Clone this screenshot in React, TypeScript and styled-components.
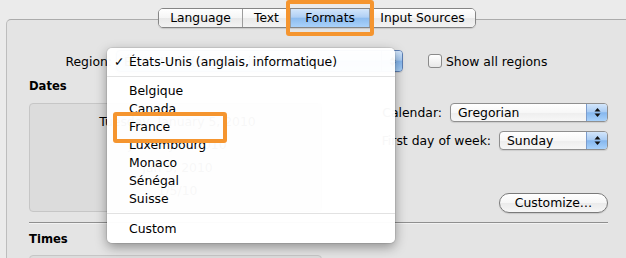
import React, { FC } from 'react'
import styled, { createGlobalStyle } from 'styled-components'

const tabs = [
  { label: 'Language', w: 83 },
  { label: 'Text', w: 47 },
  { label: 'Formats', w: 78, active: true },
  { label: 'Input Sources', w: 105 },
]

const regions = ['Belgique', 'Canada', 'France', 'Luxembourg', 'Monaco', 'Sénégal', 'Suisse']

const dates = ['Tuesday, January 5, 2010', 'January 5, 2010', 'Jan 5, 2010', '1/5/10']

const Arrows: FC = () => (
  <svg width="7" height="11" viewBox="0 0 7 11">
    <path d="M3.5 1 L6.5 4.5 L0.5 4.5 Z" fill="#111" />
    <path d="M3.5 10 L6.5 6.5 L0.5 6.5 Z" fill="#111" />
  </svg>
)

const App: FC = () => {
  return (
    <Page>
      <GlobalStyle />
      <TabBar>
        {tabs.map((t) => (
          <Tab key={t.label} $w={t.w} $active={!!t.active}>
            {t.label}
          </Tab>
        ))}
      </TabBar>
      <Panel>
        <RegionRow>
          <RegionLabel>Region:</RegionLabel>
          <Popup $w={287} $h={22} $open>
            <PopupText>États-Unis (anglais, informatique)</PopupText>
            <PopupArrow>
              <Arrows />
            </PopupArrow>
          </Popup>
          <CheckRow>
            <CheckBox />
            <span>Show all regions</span>
          </CheckRow>
        </RegionRow>

        <Heading>Dates</Heading>
        <SectionBody>
          <SampleBox>
            {dates.map((d) => (
              <SampleLine key={d}>{d}</SampleLine>
            ))}
          </SampleBox>
          <RightCol>
            <FieldRow>
              <span>Calendar:</span>
              <Popup $w={158} $h={19}>
                <PopupText>Gregorian</PopupText>
                <PopupArrow>
                  <Arrows />
                </PopupArrow>
              </Popup>
            </FieldRow>
            <FieldRow $mt={9}>
              <span>First day of week:</span>
              <Popup $w={109} $h={19}>
                <PopupText>Sunday</PopupText>
                <PopupArrow>
                  <Arrows />
                </PopupArrow>
              </Popup>
            </FieldRow>
            <PillButton>Customize…</PillButton>
          </RightCol>
        </SectionBody>
        <Rule />
        <Heading $mt={10}>Times</Heading>
        <SectionBody $mt={9}>
          <SampleBox />
        </SectionBody>
      </Panel>

      <Menu>
        <MenuItem>
          <Mark>✓</Mark>
          États-Unis (anglais, informatique)
        </MenuItem>
        <MenuSep />
        {regions.map((r) => (
          <MenuItem key={r}>
            <Mark />
            {r}
          </MenuItem>
        ))}
        <MenuSep $mb={6} />
        <MenuItem>
          <Mark />
          Custom
        </MenuItem>
      </Menu>

      <FormatsMark />
      <FranceMark />
    </Page>
  )
}

export default App

const GlobalStyle = createGlobalStyle`
  html, body {
    margin: 0;
    padding: 0;
    background: #ebebeb;
  }
  body {
    font-family: 'DejaVu Sans', 'Liberation Sans', sans-serif;
    font-size: 12.4px;
    color: #000;
  }
`

const Page = styled.div`
  position: relative;
  width: 626px;
  height: 258px;
  overflow: hidden;
  box-sizing: border-box;
  padding: 8px 0 0 6px;
  background: #ebebeb;
`

const TabBar = styled.div`
  position: relative;
  z-index: 1;
  display: flex;
  width: fit-content;
  height: 18px;
  margin-left: 152px;
  border: 1px solid #858585;
  border-radius: 5px;
  overflow: hidden;
  box-shadow: 0 1px 1px rgba(0, 0, 0, 0.12);
`

const Tab = styled.div<{ $w: number; $active: boolean }>`
  width: ${(p) => p.$w}px;
  line-height: 18px;
  text-align: center;
  font-size: 12.3px;
  background: ${(p) =>
    p.$active
      ? 'linear-gradient(#d3e6fb 0%, #b0d0f5 45%, #8dbcef 52%, #a9d2fb 100%)'
      : 'linear-gradient(#ffffff 0%, #f5f5f5 50%, #e9e9e9 52%, #f3f3f3 100%)'};
  & + & {
    border-left: 1px solid #9c9c9c;
  }
`

const Panel = styled.div`
  width: 640px;
  height: 260px;
  margin-top: -9px;
  box-sizing: border-box;
  border-top: 1px solid #ababab;
  border-left: 1px solid #bdbdbd;
  border-top-left-radius: 5px;
  background: #e4e4e4;
`

const RegionRow = styled.div`
  display: flex;
  align-items: center;
  height: 22px;
  margin-top: 30px;
`

const RegionLabel = styled.div`
  width: 105px;
  margin-right: 4px;
  text-align: right;
`

const Popup = styled.div<{ $w: number; $h: number; $open?: boolean }>`
  display: flex;
  align-items: center;
  width: ${(p) => p.$w}px;
  height: ${(p) => p.$h}px;
  box-sizing: border-box;
  border: 1px solid ${(p) => (p.$open ? '#5d7fb4' : '#8f8f8f')};
  border-radius: 4px;
  overflow: hidden;
  background: ${(p) =>
    p.$open
      ? 'linear-gradient(#d3e6fb 0%, #b0d0f5 45%, #8dbcef 52%, #a9d2fb 100%)'
      : 'linear-gradient(#ffffff 0%, #f7f7f7 50%, #eeeeee 52%, #f7f7f7 100%)'};
  box-shadow: 0 1px 1px rgba(0, 0, 0, 0.1);
`

const PopupText = styled.span`
  flex: 1;
  padding-left: 7px;
  white-space: nowrap;
`

const PopupArrow = styled.div`
  display: flex;
  align-items: center;
  justify-content: center;
  width: 20px;
  height: 100%;
  border-left: 1px solid #7c9ccc;
  background: linear-gradient(#d3e6fb 0%, #abcdf4 45%, #86b7ee 52%, #a9d2fb 100%);
`

const CheckRow = styled.label`
  display: flex;
  align-items: center;
  gap: 4px;
  margin-left: 25px;
`

const CheckBox = styled.span`
  width: 14px;
  height: 14px;
  box-sizing: border-box;
  border: 1px solid #8a8a8a;
  border-radius: 3px;
  background: linear-gradient(#ffffff, #e8e8e8);
`

const Heading = styled.div<{ $mt?: number }>`
  margin-top: ${(p) => p.$mt ?? 8}px;
  padding-left: 22px;
  line-height: 13px;
  font-size: 11.6px;
  font-weight: bold;
`

const SectionBody = styled.div<{ $mt?: number }>`
  display: flex;
  margin-top: ${(p) => p.$mt ?? 10}px;
  padding-left: 22px;
`

const SampleBox = styled.div`
  width: 293px;
  height: 109px;
  box-sizing: border-box;
  padding: 6px 0 0 4px;
  border: 1px solid #c6c6c6;
  border-radius: 4px;
  background: #dcdcdc;
`

const SampleLine = styled.div`
  line-height: 23px;
  text-align: center;
`

const RightCol = styled.div`
  display: flex;
  flex-direction: column;
  align-items: flex-end;
  width: 286px;
`

const FieldRow = styled.div<{ $mt?: number }>`
  display: flex;
  align-items: center;
  gap: 8px;
  margin-top: ${(p) => p.$mt ?? 0}px;
`

const PillButton = styled.div`
  width: 109px;
  height: 20px;
  margin-top: 43px;
  box-sizing: border-box;
  border: 1px solid #7a7a7a;
  border-radius: 10px;
  line-height: 18px;
  text-align: center;
  background: linear-gradient(#ffffff 0%, #f6f6f6 50%, #ebebeb 52%, #f6f6f6 100%);
  box-shadow: 0 1px 1px rgba(0, 0, 0, 0.12);
`

const Rule = styled.div`
  width: 579px;
  height: 1px;
  margin: 9px 0 0 22px;
  background: #8f8f8f;
  box-shadow: 0 1px 0 #f2f2f2;
`

const Menu = styled.div`
  position: absolute;
  z-index: 2;
  left: 107px;
  top: 48px;
  width: 288px;
  box-sizing: border-box;
  padding: 5px 0 5px;
  border-radius: 5px;
  background: rgba(255, 255, 255, 0.97);
  box-shadow: 0 4px 12px rgba(0, 0, 0, 0.38), 0 0 0 1px rgba(0, 0, 0, 0.07);
`

const MenuItem = styled.div`
  display: flex;
  height: 18px;
  line-height: 18px;
  white-space: nowrap;
`

const Mark = styled.span`
  width: 22px;
  padding-left: 7px;
  box-sizing: border-box;
`

const MenuSep = styled.div<{ $mb?: number }>`
  height: 1px;
  margin: 5px 0 ${(p) => p.$mb ?? 5}px;
  background: #e2e2e2;
`

const Highlight = styled.div`
  position: absolute;
  z-index: 3;
  box-sizing: border-box;
  border: 4px solid #f5952f;
  border-radius: 3px;
`

const FormatsMark = styled(Highlight)`
  left: 286px;
  top: 0;
  width: 88px;
  height: 36px;
`

const FranceMark = styled(Highlight)`
  left: 113px;
  top: 112px;
  width: 114px;
  height: 31px;
`
